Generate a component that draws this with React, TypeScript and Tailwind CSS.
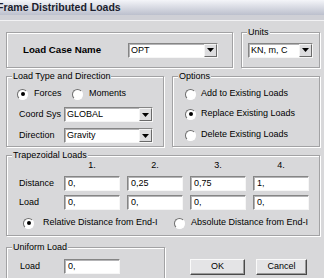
import type { ReactNode } from 'react'

const sunken =
  'border border-t-[#858585] border-l-[#858585] border-r-[#f6f6f6] border-b-[#f6f6f6] shadow-[inset_1px_1px_0_#b4b4b6]'

function Group({ legend, className, children }: { legend?: string; className?: string; children?: ReactNode }) {
  return (
    <div
      className={`relative border border-[#a2a2a4] shadow-[inset_1px_1px_0_#fff,1px_1px_0_#fff] ${className ?? ''}`}
    >
      {legend && (
        <span className="absolute left-[5px] top-[-6px] bg-[#d8d8da] px-[1px] leading-[11px]">{legend}</span>
      )}
      {children}
    </div>
  )
}

function Radio({ on }: { on?: boolean }) {
  return (
    <span className="flex h-[11px] w-[11px] shrink-0 items-center justify-center rounded-full border border-t-[#6e6e6e] border-l-[#6e6e6e] border-r-white border-b-white bg-white">
      {on && <span className="h-[4px] w-[4px] rounded-full bg-black" />}
    </span>
  )
}

function Combo({ value, className }: { value: string; className?: string }) {
  return (
    <div className={`flex h-[15px] items-center bg-white ${sunken} ${className ?? ''}`}>
      <span className="flex-1 pl-[2px] leading-none">{value}</span>
      <span className="flex h-full w-[13px] items-center justify-center border border-t-[#f4f4f4] border-l-[#f4f4f4] border-r-[#6a6a6a] border-b-[#6a6a6a] bg-[#dcdcde]">
        <svg width="7" height="4" viewBox="0 0 7 4">
          <path d="M0 0h7L3.5 4z" fill="#000" />
        </svg>
      </span>
    </div>
  )
}

function Field({ value, className }: { value: string; className?: string }) {
  return (
    <div className={`flex h-[15px] items-center bg-white pl-[3px] leading-none ${sunken} ${className ?? ''}`}>
      {value}
    </div>
  )
}

function Button({ children }: { children: ReactNode }) {
  return (
    <div className="flex h-[16px] items-center justify-center border border-t-[#fafafa] border-l-[#fafafa] border-r-[#4a4a4a] border-b-[#4a4a4a] bg-[#e4e4e6] shadow-[inset_-1px_-1px_0_#9a9a9a]">
      {children}
    </div>
  )
}

export default function App() {
  const cols = ['1.', '2.', '3.', '4.']
  const dist = ['0,', '0,25', '0,75', '1,']
  const load = ['0,', '0,', '0,', '0,']

  return (
    <div className="h-[278px] w-[324px] overflow-hidden bg-[#d8d8da] font-['Liberation_Sans',Arial,sans-serif] text-[9px] text-black">
      <div className="flex h-[15px] items-center bg-gradient-to-b from-[#f4f5f9] to-[#bcc0cd]">
        <span className="ml-[-3px] text-[10.5px] font-bold leading-none text-[#1b1d2e]">Frame Distributed Loads</span>
      </div>
      <div className="h-[6px] border-b border-[#f2f2f4] bg-[#cfd0d6]" />

      <div className="pl-[6px]">
        <div className="mt-[11px] flex h-[36px]">
          <Group className="flex w-[227px] items-center">
            <span className="ml-[16px] w-[105px] text-[9.7px] font-bold">Load Case Name</span>
            <Combo value="OPT" className="w-[90px]" />
          </Group>
          <Group legend="Units" className="ml-[8px] flex w-[79px] items-center">
            <Combo value="KN, m, C" className="ml-[6px] w-[65px]" />
          </Group>
        </div>

        <div className="mt-[8px] flex h-[71px]">
          <Group legend="Load Type and Direction" className="w-[158px]">
            <div className="mt-[11px] flex h-[12px] items-center pl-[10px]">
              <div className="flex w-[55px] items-center gap-[6px]">
                <Radio on />
                <span>Forces</span>
              </div>
              <div className="flex items-center gap-[6px]">
                <Radio />
                <span>Moments</span>
              </div>
            </div>
            <div className="mt-[7px] flex h-[15px] items-center pl-[12px]">
              <span className="w-[45px]">Coord Sys</span>
              <Combo value="GLOBAL" className="w-[89px]" />
            </div>
            <div className="mt-[6px] flex h-[15px] items-center pl-[12px]">
              <span className="w-[45px]">Direction</span>
              <Combo value="Gravity" className="w-[89px]" />
            </div>
          </Group>
          <Group legend="Options" className="ml-[8px] w-[148px]">
            <div className="flex flex-col pl-[12px] pt-[11px]">
              <div className="flex h-[12px] items-center gap-[5px]">
                <Radio />
                <span>Add to Existing Loads</span>
              </div>
              <div className="mt-[8px] flex h-[12px] items-center gap-[5px]">
                <Radio on />
                <span>Replace Existing Loads</span>
              </div>
              <div className="mt-[9px] flex h-[12px] items-center gap-[5px]">
                <Radio />
                <span>Delete Existing Loads</span>
              </div>
            </div>
          </Group>
        </div>

        <Group legend="Trapezoidal Loads" className="mt-[8px] h-[81px] w-[314px]">
          <div className="mt-[4px] flex h-[10px] items-center pl-[57px]">
            {cols.map((c) => (
              <span key={c} className="mr-[7px] w-[56px] text-center leading-none">
                {c}
              </span>
            ))}
          </div>
          <div className="mt-[6px] flex items-center pl-[12px]">
            <span className="w-[45px]">Distance</span>
            <div className="flex gap-[7px]">
              {dist.map((d, i) => (
                <Field key={i} value={d} className="w-[56px]" />
              ))}
            </div>
          </div>
          <div className="mt-[4px] flex items-center pl-[12px]">
            <span className="w-[45px]">Load</span>
            <div className="flex gap-[7px]">
              {load.map((d, i) => (
                <Field key={i} value={d} className="w-[56px]" />
              ))}
            </div>
          </div>
          <div className="mt-[7px] flex h-[12px] items-center pl-[16px]">
            <div className="flex w-[151px] items-center gap-[9px]">
              <Radio on />
              <span>Relative Distance from End-I</span>
            </div>
            <div className="flex items-center gap-[6px]">
              <Radio />
              <span>Absolute Distance from End-I</span>
            </div>
          </div>
        </Group>

        <div className="mt-[11px] flex">
          <Group legend="Uniform Load" className="h-[40px] w-[159px]">
            <div className="mt-[11px] flex items-center pl-[13px]">
              <span className="w-[44px]">Load</span>
              <Field value="0," className="w-[56px] border-t-[#5a5a5a] border-l-[#5a5a5a]" />
            </div>
          </Group>
          <div className="ml-[25px] mt-[12px] flex gap-[11px]">
            <div className="w-[55px]">
              <Button>OK</Button>
            </div>
            <div className="w-[51px]">
              <Button>Cancel</Button>
            </div>
          </div>
        </div>
      </div>
    </div>
  )
}
